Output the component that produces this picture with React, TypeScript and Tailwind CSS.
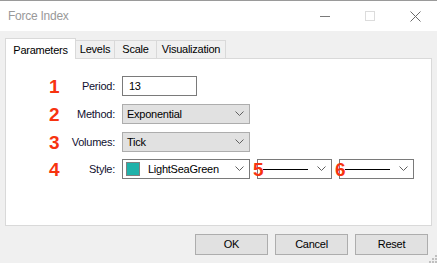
import { ReactNode } from 'react';

const ui = "font-['Liberation_Sans',Arial,sans-serif] tracking-[-0.25px]";

function Chevron() {
  return (
    <svg width="9" height="6" viewBox="0 0 9 6" className="shrink-0">
      <path d="M0.5 0.5 L4.5 4.5 L8.5 0.5" fill="none" stroke="#606060" strokeWidth="1" />
    </svg>
  );
}

function Mark({ n, className = '' }: { n: string; className?: string }) {
  return (
    <span
      className={`font-['Liberation_Sans',Arial,sans-serif] text-[19px] font-bold leading-none tracking-normal text-[#f7330f] ${className}`}
    >
      {n}
    </span>
  );
}

function Row({ n, label, children }: { n: string; label: string; children: ReactNode }) {
  return (
    <div className="flex h-[20px] items-center">
      <div className="flex w-[109px] items-center justify-between">
        <Mark n={n} className="ml-[43px] w-[10px]" />
        <span className="text-[11px] text-[#101030]">{label}</span>
      </div>
      <div className="ml-[7px] flex items-center">{children}</div>
    </div>
  );
}

function Combo({ text, width = 'w-[128px]' }: { text: string; width?: string }) {
  return (
    <div
      className={`flex h-[20px] ${width} items-center justify-between border border-[#adadad] bg-[#e1e1e1] pl-[4px] pr-[5px] text-[11px] text-black`}
    >
      <span>{text}</span>
      <Chevron />
    </div>
  );
}

function LineCombo() {
  return (
    <div className="flex h-[20px] w-[75px] items-center justify-between border border-[#7a7a7a] bg-white pl-[5px] pr-[5px]">
      <div className="h-px w-[45px] bg-black" />
      <Chevron />
    </div>
  );
}

function Button({ label }: { label: string }) {
  return (
    <div className="flex h-[21px] w-[73px] items-center justify-center border border-[#adadad] bg-[#e1e1e1] text-[11px] text-black">
      {label}
    </div>
  );
}

export default function App() {
  return (
    <div className={`flex h-[263px] w-[437px] flex-col overflow-hidden bg-[#f0f0f0] ${ui}`}>
      <div className="h-px bg-[#9a9a9a]" />

      {/* title bar */}
      <div className="flex h-[30px] items-center bg-white">
        <span className="ml-[8px] text-[12px] text-[#999999]">Force Index</span>
        <div className="ml-auto flex items-center">
          <div className="h-px w-[10px] bg-[#7a7a7a]" />
          <div className="ml-[35px] h-[10px] w-[10px] border border-[#dcdcdc]" />
          <svg width="11" height="11" viewBox="0 0 11 11" className="ml-[35px] mr-[16px]">
            <path d="M0.5 0.5 L10.5 10.5 M10.5 0.5 L0.5 10.5" stroke="#6a6a6a" strokeWidth="1" />
          </svg>
        </div>
      </div>

      {/* tabs */}
      <div className="ml-[5px] mt-[7px] flex items-end">
        <div className="relative z-10 -mb-px flex h-[21px] w-[71px] items-start justify-center border border-b-0 border-[#d9d9d9] bg-white pt-[3px] text-[11px] text-black">
          Parameters
        </div>
        <div className="flex h-[18px] w-[39px] items-center justify-center border border-b-0 border-l-0 border-[#d9d9d9] bg-[#f0f0f0] text-[11px] text-black">
          Levels
        </div>
        <div className="flex h-[18px] w-[42px] items-center justify-center border border-b-0 border-l-0 border-[#d9d9d9] bg-[#f0f0f0] text-[11px] text-black">
          Scale
        </div>
        <div className="flex h-[18px] w-[69px] items-center justify-center border border-b-0 border-l-0 border-[#d9d9d9] bg-[#f0f0f0] text-[11px] text-black">
          Visualization
        </div>
      </div>

      {/* panel */}
      <div className="ml-[5px] flex h-[168px] w-[427px] flex-col gap-[8px] border border-[#d9d9d9] bg-white pt-[17px]">
        <Row n="1" label="Period:">
          <div className="flex h-[20px] w-[75px] items-center border border-[#7a7a7a] bg-white pl-[6px] text-[11px] text-black">
            13
          </div>
        </Row>
        <Row n="2" label="Method:">
          <Combo text="Exponential" />
        </Row>
        <Row n="3" label="Volumes:">
          <Combo text="Tick" />
        </Row>
        <div className="-mt-px">
          <Row n="4" label="Style:">
            <div className="flex h-[20px] w-[128px] items-center justify-between border border-[#7a7a7a] bg-white pl-[3px] pr-[5px] text-[11px] text-black">
              <div className="flex items-center">
                <div className="h-[14px] w-[14px] border border-[#808080] bg-[#20b2aa]" />
                <span className="ml-[8px]">LightSeaGreen</span>
              </div>
              <Chevron />
            </div>
            <div className="relative ml-[7px]">
              <LineCombo />
              <Mark n="5" className="absolute left-[-4px] top-[1px]" />
            </div>
            <div className="relative ml-[7px]">
              <LineCombo />
              <Mark n="6" className="absolute left-[-4px] top-[1px]" />
            </div>
          </Row>
        </div>
      </div>

      {/* buttons */}
      <div className="relative mt-[8px] flex gap-[7px] pl-[195px]">
        <Button label="OK" />
        <Button label="Cancel" />
        <Button label="Reset" />
      </div>
      <div className="relative flex-1">
        <svg width="8" height="8" viewBox="0 0 8 8" className="absolute bottom-0 right-0">
          <rect x="6" y="0" width="2" height="2" fill="#c0c0c0" />
          <rect x="3" y="3" width="2" height="2" fill="#c0c0c0" />
          <rect x="6" y="3" width="2" height="2" fill="#c0c0c0" />
          <rect x="0" y="6" width="2" height="2" fill="#c0c0c0" />
          <rect x="3" y="6" width="2" height="2" fill="#c0c0c0" />
          <rect x="6" y="6" width="2" height="2" fill="#c0c0c0" />
        </svg>
      </div>
    </div>
  );
}
